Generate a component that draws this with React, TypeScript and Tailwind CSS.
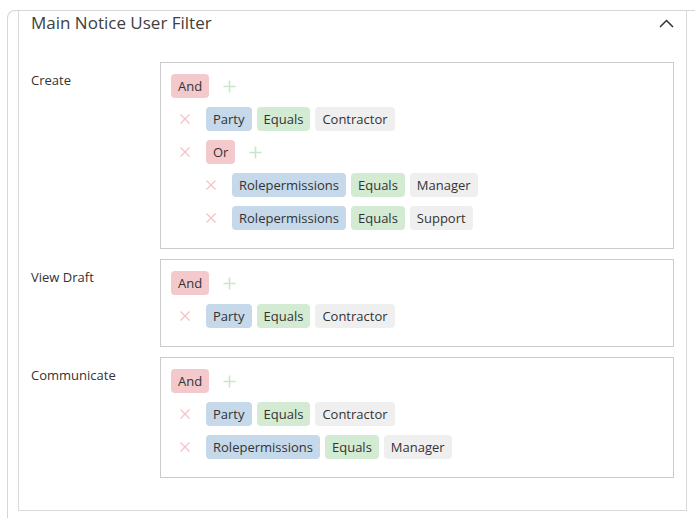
type Cond = { field: string; cmp: string; value: string }
type Group = { op: string; items: Node[] }
type Node = Cond | Group

type Row =
  | { kind: 'group'; level: number; op: string }
  | { kind: 'cond'; level: number; cond: Cond }

const filters: { label: string; root: Group }[] = [
  {
    label: 'Create',
    root: {
      op: 'And',
      items: [
        { field: 'Party', cmp: 'Equals', value: 'Contractor' },
        {
          op: 'Or',
          items: [
            { field: 'Rolepermissions', cmp: 'Equals', value: 'Manager' },
            { field: 'Rolepermissions', cmp: 'Equals', value: 'Support' },
          ],
        },
      ],
    },
  },
  {
    label: 'View Draft',
    root: {
      op: 'And',
      items: [{ field: 'Party', cmp: 'Equals', value: 'Contractor' }],
    },
  },
  {
    label: 'Communicate',
    root: {
      op: 'And',
      items: [
        { field: 'Party', cmp: 'Equals', value: 'Contractor' },
        { field: 'Rolepermissions', cmp: 'Equals', value: 'Manager' },
      ],
    },
  },
]

// flatten the tree into indented rows
function flatten(node: Node, level: number, out: Row[]) {
  if ('op' in node) {
    out.push({ kind: 'group', level, op: node.op })
    node.items.forEach((n) => flatten(n, level + 1, out))
  } else {
    out.push({ kind: 'cond', level, cond: node })
  }
  return out
}

const chipBase = 'h-[24px] leading-[24px] px-[7px] rounded-[4px] text-[13px] text-[#333]'

function RemoveIcon() {
  return (
    <svg width="12" height="12" viewBox="0 0 12 12" className="block">
      <path d="M1.5 1.5 L10.5 10.5 M10.5 1.5 L1.5 10.5" stroke="#f2c3c7" strokeWidth="1.3" fill="none" />
    </svg>
  )
}

function AddIcon() {
  return (
    <svg width="13" height="13" viewBox="0 0 13 13" className="block">
      <path d="M6.5 0.5 V12.5 M0.5 6.5 H12.5" stroke="#c9e6c9" strokeWidth="1.6" fill="none" />
    </svg>
  )
}

function FilterRow({ row }: { row: Row }) {
  const indent = row.level > 1 ? (row.level - 1) * 26 : 0
  return (
    <div className="flex items-center h-[24px]" style={{ marginLeft: indent }}>
      {row.level > 0 && (
        <button className="w-[28px] h-[24px] mr-[7px] flex items-center justify-center">
          <RemoveIcon />
        </button>
      )}
      {row.kind === 'group' ? (
        <>
          <span className={`${chipBase} bg-[#f4c9cc]`}>{row.op}</span>
          <button className="ml-[13px] w-[14px] h-[24px] flex items-center justify-center">
            <AddIcon />
          </button>
        </>
      ) : (
        <div className="flex items-center gap-[5px]">
          <span className={`${chipBase} bg-[#c5d9ea]`}>{row.cond.field}</span>
          <span className={`${chipBase} bg-[#d3ead3]`}>{row.cond.cmp}</span>
          <span className={`${chipBase} bg-[#efefef]`}>{row.cond.value}</span>
        </div>
      )}
    </div>
  )
}

export default function App() {
  return (
    <div
      className="h-[518px] w-[695px] overflow-hidden bg-white pt-[10px]"
      style={{ fontFamily: '"Open Sans", "Noto Sans", sans-serif' }}
    >
      <div className="ml-[7px] w-[740px] min-h-[600px] border-l border-t border-[#d6d6d6] rounded-tl-[8px]">
        <div className="ml-[10px] w-[669px] border-l border-r border-b border-[#dadada] px-[12px]">
          <div className="flex items-center justify-between h-[24px]">
            <h2 className="text-[17px] text-[#404040]">Main Notice User Filter</h2>
            <svg width="15" height="9" viewBox="0 0 15 9" className="block">
              <path d="M1 8 L7.5 1.5 L14 8" stroke="#333" strokeWidth="1.5" fill="none" />
            </svg>
          </div>

          <div className="mt-[27px] pb-[32px] flex flex-col gap-[10px]">
            {filters.map((f) => (
              <div key={f.label} className="flex">
                <div className="w-[129px] pt-[9px] text-[13px] leading-[18px] text-[#333]">{f.label}</div>
                <div className="w-[514px] border border-[#cbcbcb] pt-[11px] pb-[18px] pl-[10px] flex flex-col gap-[9px]">
                  {flatten(f.root, 0, []).map((row, i) => (
                    <FilterRow key={i} row={row} />
                  ))}
                </div>
              </div>
            ))}
          </div>
        </div>
      </div>
    </div>
  )
}
